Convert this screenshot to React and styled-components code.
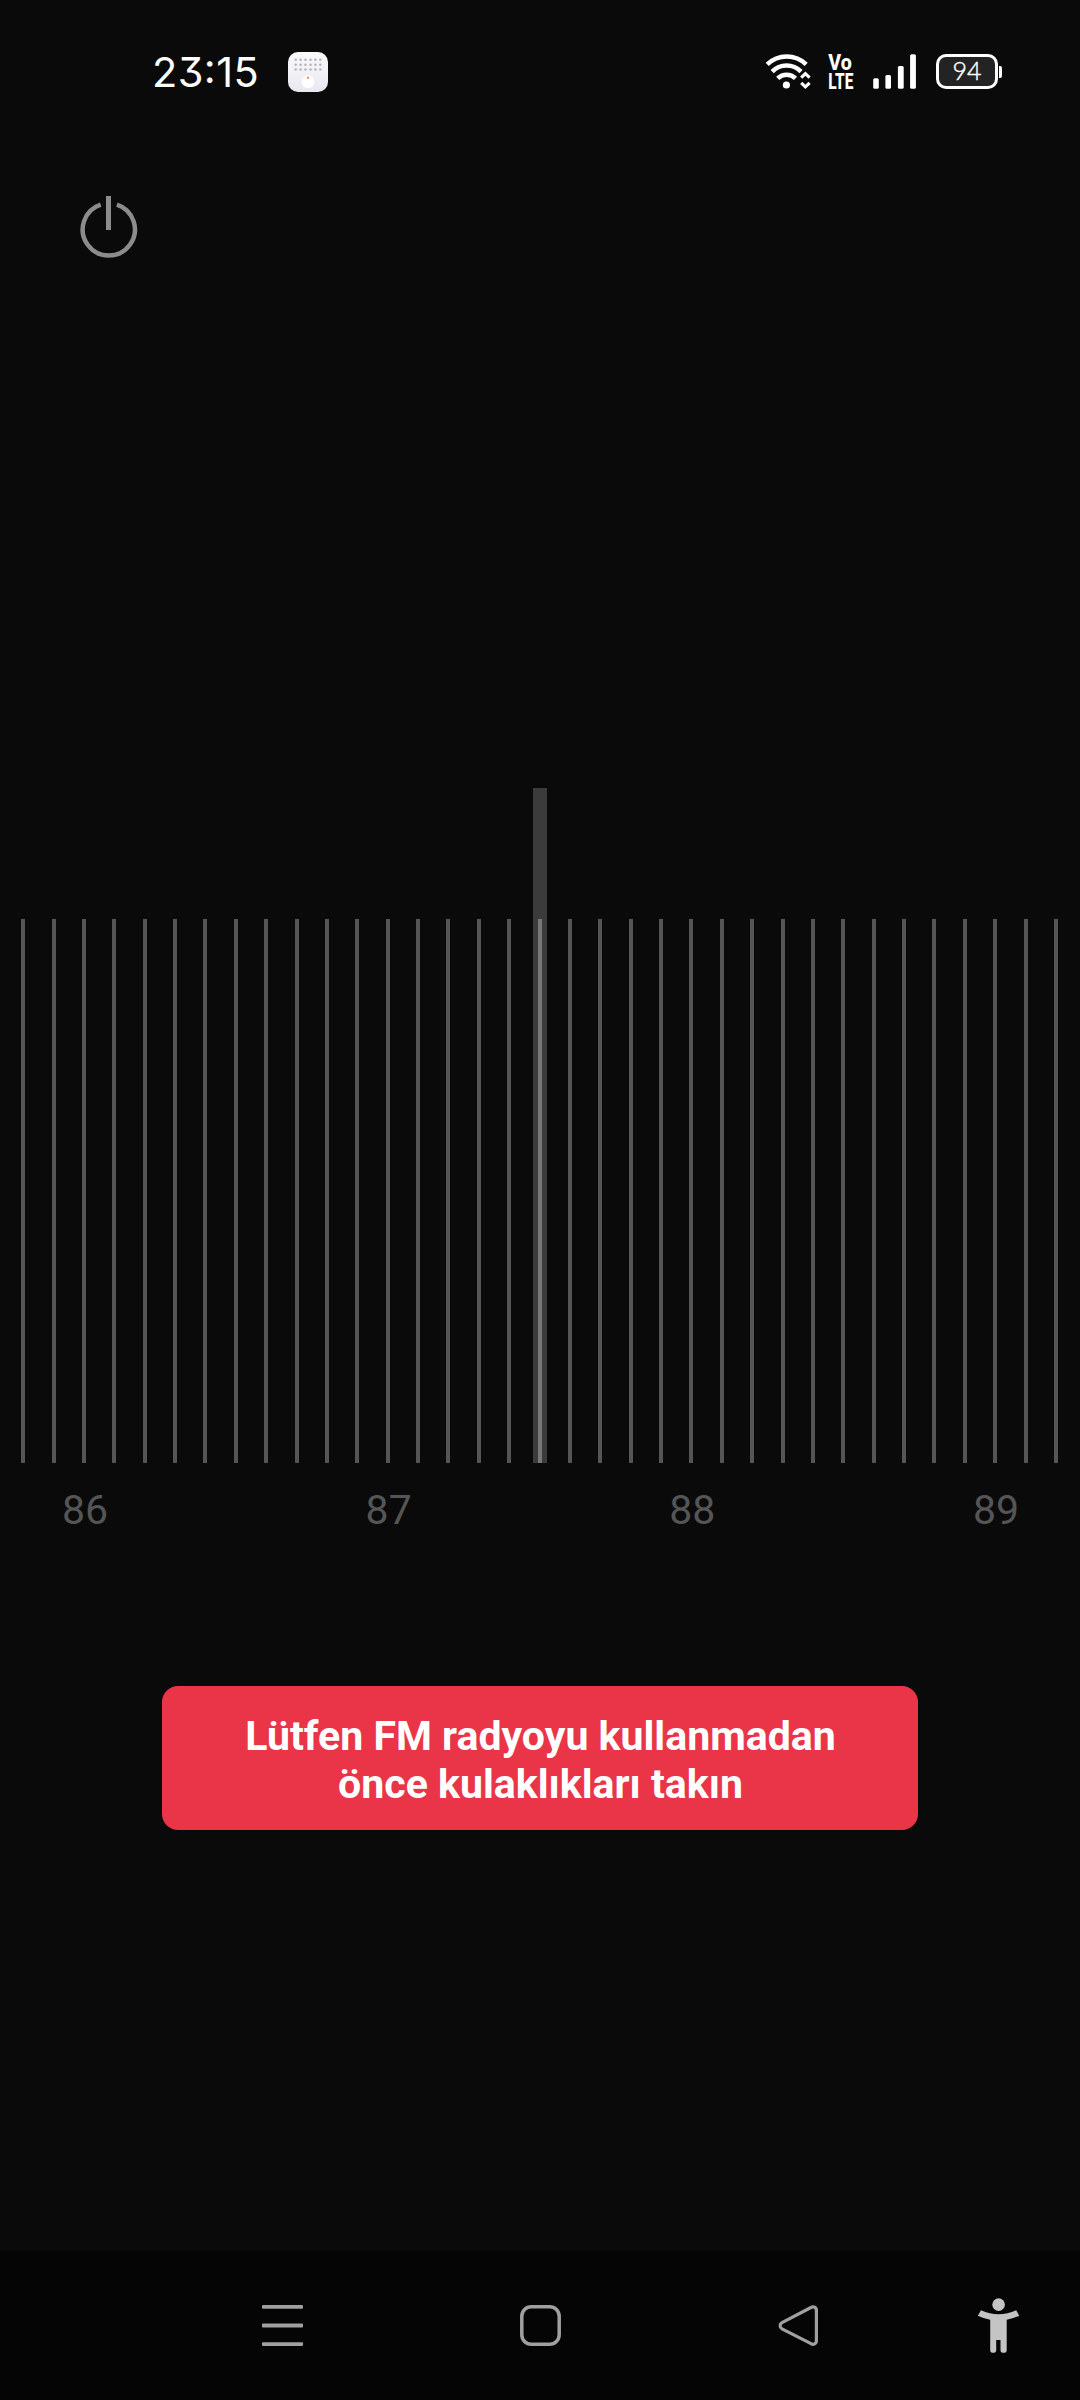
import React from "react";
import styled, { createGlobalStyle } from "styled-components";

const GlobalStyle = createGlobalStyle`
  body {
    margin: 0;
    background: #0a0a0a;
  }
`;

const Screen = styled.div`
  display: flex;
  flex-direction: column;
  width: 1080px;
  height: 2400px;
  overflow: hidden;
  background: #0a0a0a;
  font-family: Roboto, sans-serif;

  svg {
    display: block;
    flex: none;
    overflow: visible;
  }
`;

const StatusBar = styled.header`
  display: flex;
  align-items: center;
  box-sizing: border-box;
  height: 144px;
  padding: 0 78px 0 152px;
`;

const Clock = styled.span`
  width: 136px;
  padding-bottom: 1px;
  font-family: Inter, sans-serif;
  font-size: 41.5px;
  font-weight: 400;
  line-height: 48px;
  letter-spacing: 0.4px;
  font-feature-settings: "cv09", "calt";
  color: #fff;
`;

const StatusIcons = styled.div`
  display: flex;
  align-items: center;
  margin-left: auto;
`;

const Volte = styled.div`
  margin: 0 18px 0 16px;
`;

const Battery = styled.div`
  display: flex;
  align-items: center;
  gap: 1px;
  margin-left: 20px;
  padding-bottom: 1px;
`;

const BatteryBody = styled.div`
  box-sizing: border-box;
  width: 62px;
  height: 35px;
  border: 3px solid #fff;
  border-radius: 10px;
  background: #232323;
  font-family: Lato, sans-serif;
  font-size: 25px;
  font-weight: 300;
  line-height: 27px;
  text-align: center;
  color: #fff;
  -webkit-text-stroke: 0.4px #fff;
`;

const BatteryTip = styled.div`
  width: 3px;
  height: 12px;
  border-radius: 0 2px 2px 0;
  background: #fff;
`;

const TopBar = styled.div`
  display: flex;
  height: 644px;
  padding: 48px 0 0 76px;
  box-sizing: border-box;
`;

const Tuner = styled.section`
  position: relative;
  height: 675px;
  padding-top: 131px;
  box-sizing: border-box;
`;

const Ticks = styled.div`
  display: flex;
  gap: 26.375px;
  height: 544px;
  padding-left: 21.2px;
`;

const Tick = styled.i`
  flex: none;
  width: 4px;
  background: #555;
`;

const Needle = styled.div`
  position: absolute;
  top: 0;
  left: 533px;
  width: 14px;
  height: 100%;
  background: rgba(255, 255, 255, 0.2);
`;

const Scale = styled.div`
  display: flex;
  justify-content: space-between;
  height: 223px;
  padding: 23px 59px 0 60px;
  box-sizing: border-box;
`;

const ScaleLabel = styled.span`
  width: 50px;
  font-size: 41px;
  line-height: 48px;
  text-align: center;
  color: #555;
`;

const Notice = styled.div`
  display: flex;
  align-items: center;
  justify-content: center;
  align-self: center;
  box-sizing: border-box;
  width: 756px;
  height: 144px;
  padding: 3px 0 0 1px;
  border-radius: 16px;
  background: #ea3548;
  color: #fff;
  font-size: 41.05px;
  font-weight: 700;
  line-height: 48px;
  text-align: center;
`;

const NavBar = styled.nav`
  display: flex;
  align-items: center;
  gap: 217px;
  height: 149px;
  margin-top: auto;
  padding-left: 262px;
  background: #050505;
`;

const Accessibility = styled.div`
  margin-left: -58px;
`;

const AppIcon = () => (
  <svg width="40" height="40" viewBox="0 0 40 40">
    <defs>
      <linearGradient id="app" x1="0" y1="0" x2="0" y2="1">
        <stop offset="0" stopColor="#fafafc" />
        <stop offset="1" stopColor="#e8e8f0" />
      </linearGradient>
    </defs>
    <rect width="40" height="40" rx="10" fill="url(#app)" />
    {[7.8, 12.7, 17.6].map((y) =>
      [7.7, 12.6, 17.5, 22.5, 27.4, 32.3].map((x) => (
        <circle key={`${x}-${y}`} cx={x} cy={y} r="1.25" fill="#b3b3b8" />
      ))
    )}
    <circle cx="20" cy="29.7" r="6.4" fill="#fff" />
    <circle cx="20" cy="25.8" r="1.2" fill="#d99a78" />
  </svg>
);

const WifiIcon = () => (
  <svg width="48" height="38" viewBox="764 53 48 38" fill="none" stroke="#fff">
    <path d="M767.2 64.4a28 28 0 0 1 39 0" strokeWidth="4.4" />
    <path d="M772.2 71.6a20 20 0 0 1 28.8 0" strokeWidth="4.4" />
    <path d="M777.7 78.4a12.5 12.5 0 0 1 17.8 0" strokeWidth="4.4" />
    <circle cx="786.4" cy="85" r="3.6" fill="#fff" stroke="none" />
    <path d="M801.2 77.6l4.2-4 4.2 4M801.2 82.8l4.2 4 4.2-4" strokeWidth="3.2" />
  </svg>
);

const VolteIcon = () => (
  <svg
    width="26"
    height="38"
    viewBox="0 0 26 38"
    fill="#fff"
    fontFamily="Roboto, sans-serif"
    fontWeight="800"
    fontSize="21.5"
  >
    <text x="0.3" y="17.3" textLength="23.5" lengthAdjust="spacingAndGlyphs">
      Vo
    </text>
    <text x="0.3" y="35.6" textLength="25" lengthAdjust="spacingAndGlyphs">
      LTE
    </text>
  </svg>
);

const SignalIcon = () => (
  <svg width="44" height="38" viewBox="872 53 44 38" fill="#fff">
    <rect x="873.2" y="78.3" width="5.6" height="10.4" rx="1.5" />
    <rect x="885.4" y="75" width="5.6" height="13.7" rx="1.5" />
    <rect x="897.9" y="66" width="5.8" height="22.7" rx="1.5" />
    <rect x="910.1" y="54.2" width="5.8" height="34.5" rx="1.5" />
  </svg>
);

const PowerIcon = () => (
  <svg width="64" height="72" viewBox="76 192 64 72" fill="none" stroke="#8c8c8c">
    <path d="M100.7 204.6A26.1 26.1 0 1 0 116.9 204.6" strokeWidth="4.5" />
    <path d="M108.5 196v34" strokeWidth="5" />
  </svg>
);

const MenuIcon = () => (
  <svg width="41" height="41" viewBox="0 0 41 41" fill="#a0a0a0">
    <rect y="0" width="41" height="3.8" rx="1" />
    <rect y="18.6" width="41" height="3.8" rx="1" />
    <rect y="37.2" width="41" height="3.8" rx="1" />
  </svg>
);

const HomeIcon = () => (
  <svg width="41" height="41" viewBox="0 0 41 41" fill="none" stroke="#a0a0a0">
    <rect x="1.8" y="1.8" width="37.4" height="37.4" rx="9.5" strokeWidth="3.5" />
  </svg>
);

const BackIcon = () => (
  <svg width="41" height="41" viewBox="0 0 41 41" fill="none" stroke="#a0a0a0">
    <path
      d="M33 2.5L4 17.6a3.5 3.5 0 0 0 0 6.2L33 38.6a3.4 3.4 0 0 0 5.4-3V5.5a3.4 3.4 0 0 0-5.4-3z"
      strokeWidth="3.2"
    />
  </svg>
);

const PersonIcon = () => (
  <svg width="42" height="55" viewBox="978 2298 42 55" fill="#c4c4c4">
    <circle cx="998.6" cy="2304.6" r="6.3" />
    <path d="M981 2310.3Q998.5 2318.3 1016.2 2310.3L1019.2 2315.8Q1013.5 2318.5 1006.7 2319.8V2350.4Q1006.5 2352.8 1003.6 2352.8Q1000.6 2352.8 1000.5 2350.4V2340H996.2V2350.4Q996 2352.8 993.2 2352.8Q990.3 2352.8 990.2 2350.4V2319.8Q983.5 2318.5 977.8 2315.8Z" />
  </svg>
);

const App = () => {
  return (
    <Screen>
      <GlobalStyle />
      <StatusBar>
        <Clock>23:15</Clock>
        <AppIcon />
        <StatusIcons>
          <WifiIcon />
          <Volte>
            <VolteIcon />
          </Volte>
          <SignalIcon />
          <Battery>
            <BatteryBody>94</BatteryBody>
            <BatteryTip />
          </Battery>
        </StatusIcons>
      </StatusBar>
      <TopBar>
        <PowerIcon />
      </TopBar>
      <Tuner>
        <Ticks>
          {Array.from({ length: 35 }, (_, i) => (
            <Tick key={i} />
          ))}
        </Ticks>
        <Needle />
      </Tuner>
      <Scale>
        {[86, 87, 88, 89].map((mhz) => (
          <ScaleLabel key={mhz}>{mhz}</ScaleLabel>
        ))}
      </Scale>
      <Notice>
        Lütfen FM radyoyu kullanmadan
        <br />
        önce kulaklıkları takın
      </Notice>
      <NavBar>
        <MenuIcon />
        <HomeIcon />
        <BackIcon />
        <Accessibility>
          <PersonIcon />
        </Accessibility>
      </NavBar>
    </Screen>
  );
};

export default App;
